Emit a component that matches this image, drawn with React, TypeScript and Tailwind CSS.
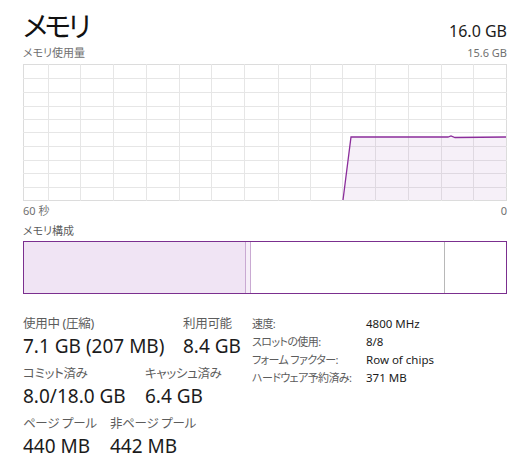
import { FC } from 'react';

const font = { fontFamily: '"Segoe UI", "Noto Sans", "Noto Sans CJK JP", sans-serif' };

const vLines = [25, 57, 90, 123, 156, 188, 221, 255, 287, 319, 352, 385, 418, 450];
const hLines = [14, 28, 42, 55, 68, 82, 96, 109, 123];

const UsageChart: FC = () => (
  <svg width={484} height={137} viewBox="0 0 484 137" className="block">
    <rect x={0.5} y={0.5} width={483} height={136} fill="#fff" stroke="#dcdcdc" />
    {vLines.map((x) => (
      <line key={`v${x}`} x1={x + 0.5} y1={0} x2={x + 0.5} y2={137} stroke="#e6e6e6" />
    ))}
    {hLines.map((y) => (
      <line key={`h${y}`} x1={0} y1={y + 0.5} x2={484} y2={y + 0.5} stroke="#e6e6e6" />
    ))}
    <polygon
      points="320,136 328,73 425,73 428,72 432,73.5 483,73 483,136"
      fill="#8b3aa0"
      fillOpacity={0.08}
    />
    <polyline
      points="320,136 328,73 425,73 428,72 432,73.5 483,73"
      fill="none"
      stroke="#8b2d9b"
      strokeWidth={1.3}
    />
  </svg>
);

const Stat: FC<{ label: string; value: string; className?: string }> = ({ label, value, className }) => (
  <div className={className}>
    <div className="text-[12.5px] leading-[18px] text-[#5c5c5c] tracking-[-0.3px]">{label}</div>
    <div className="text-[19px] leading-[26px] text-[#1b1b1b]">{value}</div>
  </div>
);

const details: [string, string][] = [
  ['速度:', '4800 MHz'],
  ['スロットの使用:', '8/8'],
  ['フォーム ファクター:', 'Row of chips'],
  ['ハードウェア予約済み:', '371 MB'],
];

export default function App() {
  return (
    <div
      className="w-[522px] h-[470px] bg-white pl-[23px] pr-[15px] overflow-hidden [font-feature-settings:'palt']"
      style={font}
    >
      <div className="flex justify-between items-end pt-[8px]">
        <span className="text-[28px] leading-[36px] text-[#111] tracking-[-3px]">メモリ</span>
        <span className="text-[16px] leading-[24px] text-[#1b1b1b] pb-[1px]">16.0 GB</span>
      </div>
      <div className="flex justify-between text-[11px] leading-[16px] text-[#707070] mt-[1px]">
        <span>メモリ使用量</span>
        <span>15.6 GB</span>
      </div>
      <div className="mt-[3px]">
        <UsageChart />
      </div>
      <div className="flex justify-between text-[11px] leading-[16px] text-[#707070] mt-[2px]">
        <span>60 秒</span>
        <span>0</span>
      </div>
      <div className="text-[11px] leading-[16px] text-[#5c5c5c] mt-[4px]">メモリ構成</div>
      <div className="mt-[2px] w-[484px] h-[53px] border border-[#7b2f8f] flex">
        <div className="w-[221px] bg-[#f0e4f4]" />
        <div className="w-[6px] bg-[#f6eef8] border-x border-[#c9a9d2]" />
        <div className="w-[193px] bg-white" />
        <div className="flex-1 bg-white border-l border-[#b8b8b8]" />
      </div>
      <div className="flex mt-[21px]">
        <div className="w-[229px]">
          <div className="flex">
            <Stat label="使用中 (圧縮)" value="7.1 GB (207 MB)" className="w-[160px]" />
            <Stat label="利用可能" value="8.4 GB" />
          </div>
          <div className="flex mt-[6px]">
            <Stat label="コミット済み" value="8.0/18.0 GB" className="w-[122px]" />
            <Stat label="キャッシュ済み" value="6.4 GB" />
          </div>
          <div className="flex mt-[6px]">
            <Stat label="ページ プール" value="440 MB" className="w-[87px]" />
            <Stat label="非ページ プール" value="442 MB" />
          </div>
        </div>
        <div className="text-[11.5px] leading-[18px] text-[#1b1b1b] whitespace-nowrap">
          {details.map(([k, v]) => (
            <div key={k} className="flex">
              <span className="w-[114px] text-[#5c5c5c] text-[11px] tracking-[-0.6px]">{k}</span>
              <span>{v}</span>
            </div>
          ))}
        </div>
      </div>
    </div>
  );
}
